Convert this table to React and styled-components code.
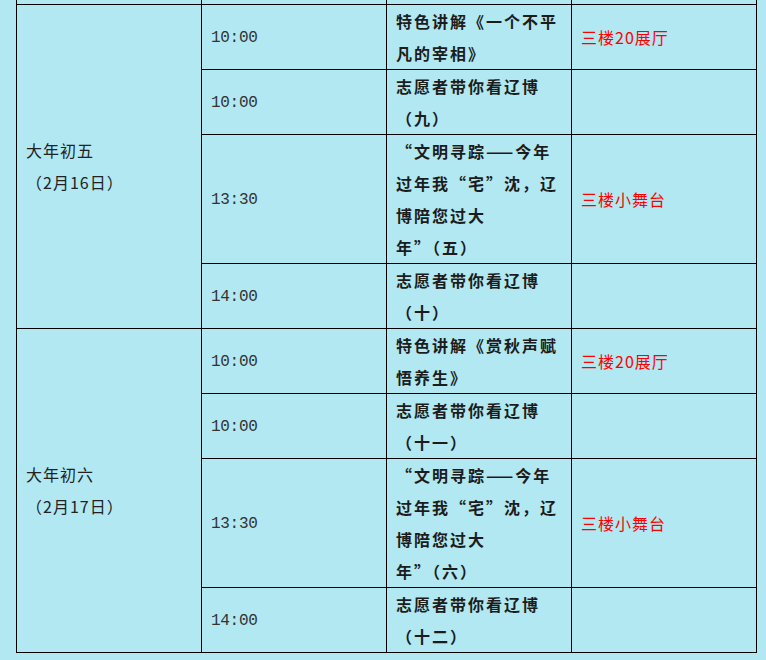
import React from 'react';
import styled, { createGlobalStyle } from 'styled-components';

const bg = '#b1e8f1';

const GlobalStyle = createGlobalStyle`
  html, body {
    margin: 0;
    padding: 0;
    background: ${bg};
  }
`;

const Page = styled.div`
  padding-left: 16px;
  background: ${bg};
  min-height: 660px;
`;

const Schedule = styled.table`
  width: 741px;
  table-layout: fixed;
  border-collapse: collapse;
  border-spacing: 0;
  background: ${bg};
`;

const Cell = styled.td`
  width: 185px;
  padding: 0 0 0 9px;
  border: 1px solid #000;
  vertical-align: middle;
  line-height: 32px;
  font-size: 16px;
  font-family: 'Noto Sans CJK SC', sans-serif;
  letter-spacing: 1px;
  color: #222;
  box-sizing: border-box;
`;

const SpacerCell = styled(Cell)`
  height: 4px;
  line-height: 0;
  font-size: 0;
  border-top: none;
  padding: 0;
`;

const DayCell = styled(Cell)`
  color: #222;
`;

const TimeCell = styled(Cell)`
  padding-top: 3px;
  font-family: 'Liberation Mono', monospace;
  letter-spacing: -0.3px;
  color: #333;
`;

const TitleCell = styled(Cell)`
  font-weight: bold;
  letter-spacing: 2px;
  color: #1c1c1c;
`;

const PlaceCell = styled(Cell)`
  color: #f00;
  letter-spacing: 1px;
`;

const days = [
  {
    name: '大年初五',
    date: '（2月16日）',
    events: [
      { time: '10:00', title: ['特色讲解《一个不平', '凡的宰相》'], place: '三楼20展厅' },
      { time: '10:00', title: ['志愿者带你看辽博', '（九）'], place: '' },
      {
        time: '13:30',
        title: ['“文明寻踪——今年', '过年我“宅”沈，辽', '博陪您过大', '年”（五）'],
        place: '三楼小舞台',
      },
      { time: '14:00', title: ['志愿者带你看辽博', '（十）'], place: '' },
    ],
  },
  {
    name: '大年初六',
    date: '（2月17日）',
    events: [
      { time: '10:00', title: ['特色讲解《赏秋声赋', '悟养生》'], place: '三楼20展厅' },
      { time: '10:00', title: ['志愿者带你看辽博', '（十一）'], place: '' },
      {
        time: '13:30',
        title: ['“文明寻踪——今年', '过年我“宅”沈，辽', '博陪您过大', '年”（六）'],
        place: '三楼小舞台',
      },
      { time: '14:00', title: ['志愿者带你看辽博', '（十二）'], place: '' },
    ],
  },
];

const Lines = ({ lines }) =>
  lines.map((line, i) => (
    <React.Fragment key={i}>
      {i > 0 && <br />}
      {line}
    </React.Fragment>
  ));

const App = () => (
  <Page>
    <GlobalStyle />
    <Schedule>
      <tbody>
        <tr>
          <SpacerCell />
          <SpacerCell />
          <SpacerCell />
          <SpacerCell />
        </tr>
        {days.map((day) =>
          day.events.map((ev, i) => (
            <tr key={day.name + i}>
              {i === 0 && (
                <DayCell rowSpan={day.events.length}>
                  {day.name}
                  <br />
                  {day.date}
                </DayCell>
              )}
              <TimeCell>{ev.time}</TimeCell>
              <TitleCell>
                <Lines lines={ev.title} />
              </TitleCell>
              <PlaceCell>{ev.place}</PlaceCell>
            </tr>
          ))
        )}
      </tbody>
    </Schedule>
  </Page>
);

export default App;
